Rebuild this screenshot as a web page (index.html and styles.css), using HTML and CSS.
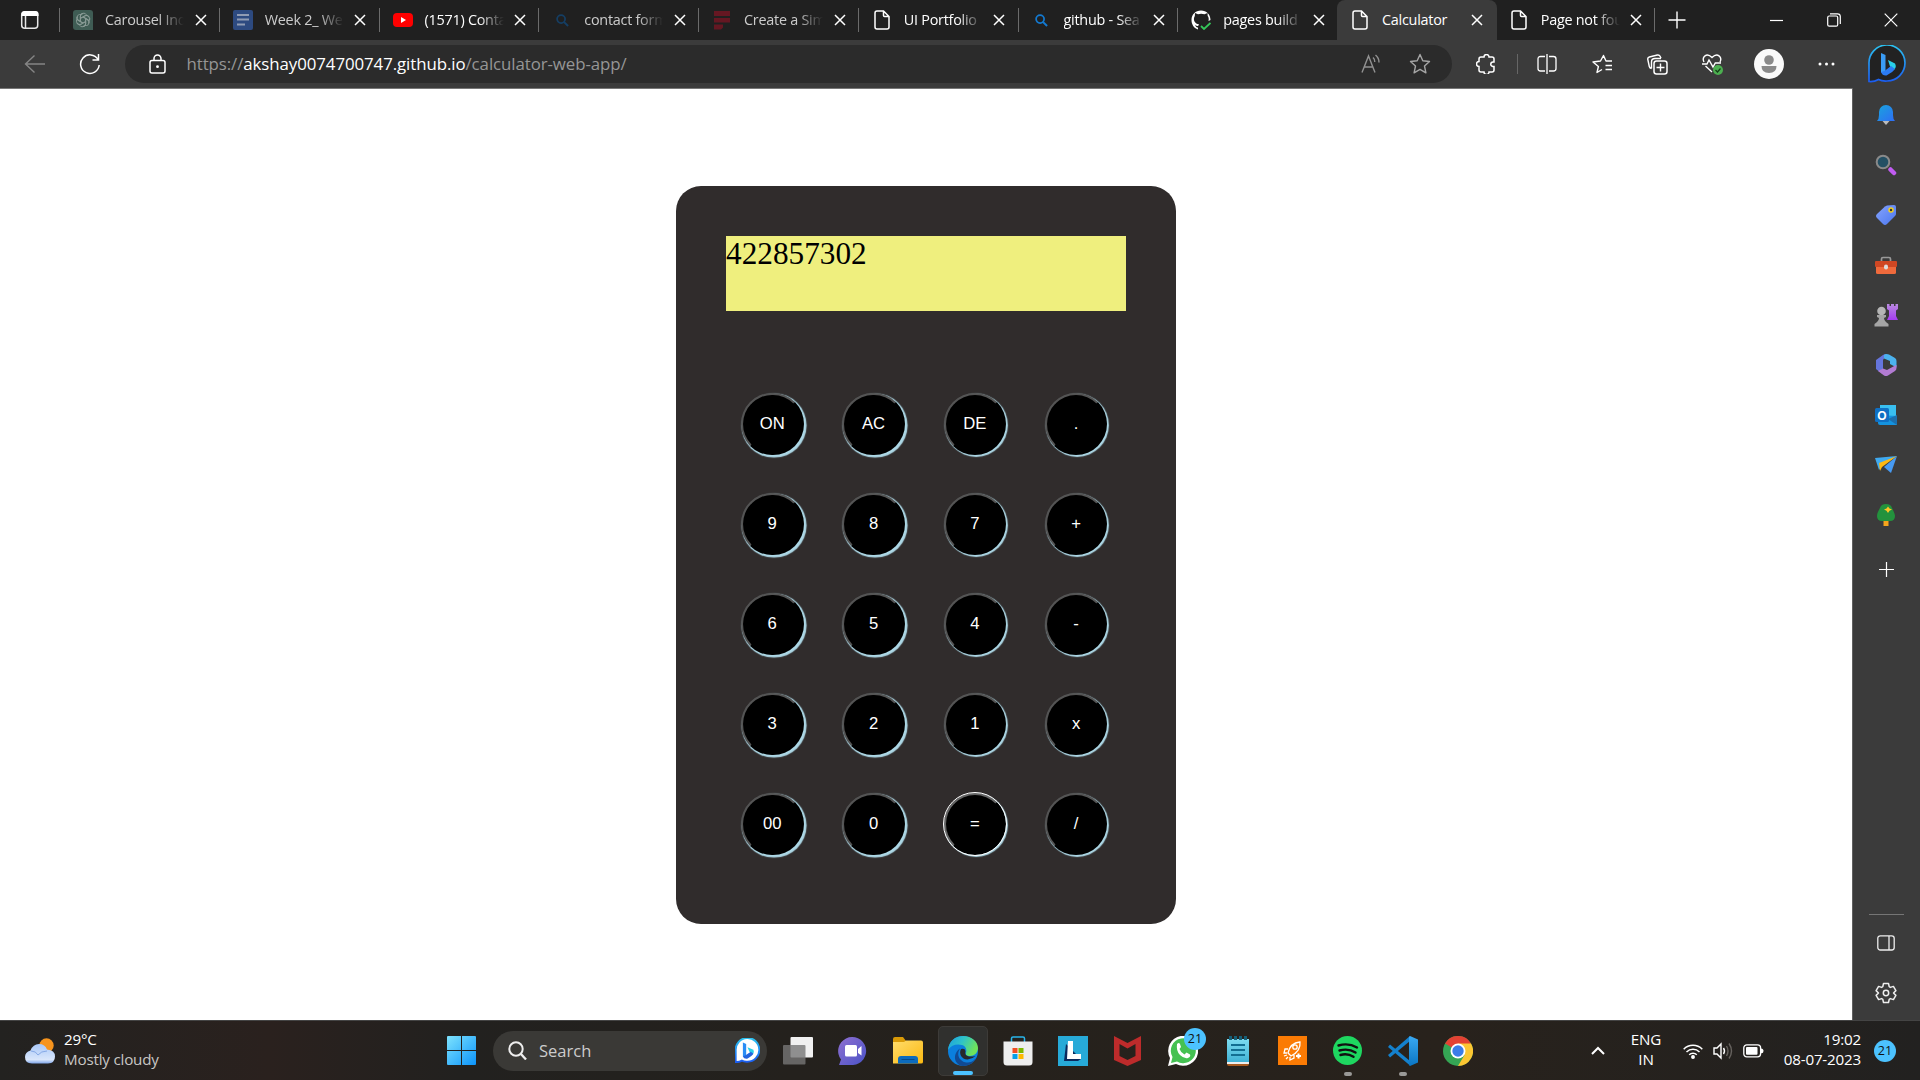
FILE: index.html
```html
<!DOCTYPE html>
<html lang="en">
<head>
<meta charset="utf-8">
<title>Calculator</title>
<link rel="stylesheet" href="styles.css">
</head>
<body>
<svg class="defs" aria-hidden="true">
  <defs>
    <symbol id="x" viewBox="0 0 12 12"><path d="M1 1l10 10M11 1L1 11" fill="none" stroke="#fff" stroke-width="1.500"/></symbol>
    <symbol id="page" viewBox="0 0 16 20"><path d="M3 1h6.500L15 6.500V17q0 2-2 2H3q-2 0-2-2V3q0-2 2-2zM9.500 1v4.500q0 1 1 1H15" fill="none" stroke="#fff" stroke-width="1.500"/></symbol>
    <symbol id="mag" viewBox="0 0 14 14"><circle cx="5.500" cy="5.500" r="4.300" fill="none" stroke="currentColor" stroke-width="1.900"/><path d="M8.500 8.500L13 13" stroke="currentColor" stroke-width="2.200"/></symbol>
    <linearGradient id="gb" x1="0" y1="0" x2="0" y2="1"><stop offset="0" stop-color="#2bc3f0"/><stop offset="1" stop-color="#1b5df0"/></linearGradient>
    <linearGradient id="gbell" x1="0" y1="0" x2="1" y2="1"><stop offset="0" stop-color="#19a5dc"/><stop offset="1" stop-color="#2f6df5"/></linearGradient>
    <linearGradient id="gwin" x1="0" y1="0" x2="1" y2="1"><stop offset="0" stop-color="#7ee3fd"/><stop offset="1" stop-color="#0c94fb"/></linearGradient>
    <linearGradient id="gtag" x1="0" y1="0" x2="1" y2="1"><stop offset="0" stop-color="#86a4fb"/><stop offset="1" stop-color="#4a76f0"/></linearGradient>
    <linearGradient id="gpur" x1="0" y1="0" x2="0" y2="1"><stop offset="0" stop-color="#b98ae0"/><stop offset="1" stop-color="#a63cf0"/></linearGradient>
    <linearGradient id="gchat" x1="0" y1="0" x2="1" y2="1"><stop offset="0" stop-color="#8f6fd0"/><stop offset="1" stop-color="#4a53c8"/></linearGradient>
    <linearGradient id="gcloud" x1="0" y1="0" x2="0" y2="1"><stop offset="0" stop-color="#a9c8f8"/><stop offset=".8" stop-color="#d9e6fb"/><stop offset="1" stop-color="#7fa5e8"/></linearGradient>
    <linearGradient id="gfold" x1="0" y1="0" x2="1" y2="1"><stop offset="0" stop-color="#ffdc6b"/><stop offset="1" stop-color="#fbb911"/></linearGradient>
    <linearGradient id="gedge" x1="0" y1="0" x2="1" y2=".4"><stop offset="0" stop-color="#1b9de0"/><stop offset=".5" stop-color="#2fc3c8"/><stop offset="1" stop-color="#6fe45a"/></linearGradient>
    <linearGradient id="gvs" x1="0" y1="0" x2="0" y2="1"><stop offset="0" stop-color="#3aa9f2"/><stop offset="1" stop-color="#0a76c4"/></linearGradient>
    <linearGradient id="gnote" x1="0" y1="0" x2="0" y2="1"><stop offset="0" stop-color="#7ddcf0"/><stop offset="1" stop-color="#41b3d6"/></linearGradient>
  </defs>
</svg>

<header class="tabstrip">
  <div class="tab-menu"><svg width="20" height="20" viewBox="0 0 20 20"><rect x="1.700" y="2" width="16" height="16.200" rx="3" fill="none" stroke="#e8e8e8" stroke-width="1.500"/><path d="M1.500 6V4q0-3 3-3h11q3 0 3 3v2z" fill="#fff"/><path d="M5.500 6v12" stroke="#e8e8e8" stroke-width="1.500"/></svg></div>
  <div class="tab dim"><span class="fav"><svg width="20" height="20" viewBox="0 0 20 20"><path d="M3 0h14q3 0 3 3v17H3q-3 0-3-3V3q0-3 3-3z" fill="#3f5c54"/><g fill="none" stroke="#8b9c97" stroke-width=".9"><path id="petal" d="M7.300 11.500V6.300a3.300 3.300 0 0 1 6.300-1.200M7.300 8.500l4.500-2.600a3 3 0 0 1 4 1"/><use href="#petal" transform="rotate(60 10 10)"/><use href="#petal" transform="rotate(120 10 10)"/><use href="#petal" transform="rotate(180 10 10)"/><use href="#petal" transform="rotate(240 10 10)"/><use href="#petal" transform="rotate(300 10 10)"/></g></svg></span><span class="title">Carousel Indi</span><svg class="close"><use href="#x"/></svg></div>
  <div class="tab dim"><span class="fav"><svg width="20" height="20" viewBox="0 0 20 20"><rect width="20" height="20" rx="2" fill="#2d4a80"/><path d="M4 5h12M4 9.500h12M4 14.500h8" stroke="#8f9bb3" stroke-width="2"/></svg></span><span class="title">Week 2_ We</span><svg class="close"><use href="#x"/></svg></div>
  <div class="tab"><span class="fav"><svg width="20" height="20" viewBox="0 0 20 20"><rect y="3" width="20" height="14" rx="4" fill="#f00"/><path d="M8 7v6l5-3z" fill="#fff"/></svg></span><span class="title">(1571) Conta</span><svg class="close"><use href="#x"/></svg></div>
  <div class="tab dim"><span class="fav deep"><svg width="13" height="13"><use href="#mag"/></svg></span><span class="title">contact form</span><svg class="close"><use href="#x"/></svg></div>
  <div class="tab dim"><span class="fav"><svg width="20" height="20" viewBox="0 0 20 20"><path d="M2 1h16v5H2zM2 8h16v4.500H2zM2 14.500h9v3L9 19.500H2z" fill="#651722"/></svg></span><span class="title">Create a Sim</span><svg class="close"><use href="#x"/></svg></div>
  <div class="tab"><span class="fav"><svg width="16" height="20"><use href="#page"/></svg></span><span class="title">UI Portfolio</span><svg class="close"><use href="#x"/></svg></div>
  <div class="tab"><span class="fav blue"><svg width="13" height="13"><use href="#mag"/></svg></span><span class="title">github - Sea</span><svg class="close"><use href="#x"/></svg></div>
  <div class="tab"><span class="fav"><svg width="20" height="20" viewBox="0 0 20 20"><path d="M7 19.500C2.500 18 .5 14 .5 10 .5 4.500 4.500.5 10 .5s9.500 4 9.500 9.500l-2 1c.4-2 .3-4-.8-5l-.2-3-3 1.200q-3.500-.7-6.500 0L4 3 3.800 6C1.500 10 4 14 8 14.300l-.7 1.500c-1.500.5-2.500 0-3.500-1.200 1 2.500 2 3 3.200 2.800z" fill="#fff"/><path d="M10 16l3 3 6.500-6" fill="none" stroke="#35c759" stroke-width="1.800"/></svg></span><span class="title">pages build</span><svg class="close"><use href="#x"/></svg></div>
  <div class="tab active"><span class="fav"><svg width="16" height="20"><use href="#page"/></svg></span><span class="title">Calculator</span><svg class="close"><use href="#x"/></svg></div>
  <div class="tab after"><span class="fav"><svg width="16" height="20"><use href="#page"/></svg></span><span class="title">Page not fou</span><svg class="close"><use href="#x"/></svg></div>
  <div class="newtab"><svg width="18" height="18" viewBox="0 0 18 18"><path d="M9 .5v17M.5 9h17" stroke="#fff" stroke-width="1.400"/></svg></div>
  <div class="winbtns">
    <span><svg width="13" height="13"><path d="M0 6.500h13" stroke="#fff" stroke-width="1.200"/></svg></span>
    <span><svg width="14" height="14" viewBox="0 0 14 14" fill="none" stroke="#fff"><rect x=".7" y="3" width="10" height="10.200" rx="1.500" stroke-width="1.200"/><path d="M3 .8h7.500q2.800 0 2.800 2.800V11" stroke-width="1.200"/></svg></span>
    <span><svg width="14" height="14" viewBox="0 0 14 14"><path d="M.7.7l12.600 12.600M13.300.7L.7 13.300" stroke="#fff" stroke-width="1.200"/></svg></span>
  </div>
</header>

<nav class="toolbar">
  <span class="tool nav"><svg width="22" height="20" viewBox="0 0 22 20"><path d="M21 10H1.500M10.500 1.500L1.500 10l9 8.500" fill="none" stroke="#858585" stroke-width="1.400"/></svg></span>
  <span class="tool nav"><svg width="22" height="22" viewBox="0 0 22 22"><path d="M19 6.500A9.300 9.300 0 1 0 20.200 12M19.500 1v6h-6" fill="none" stroke="#fff" stroke-width="1.500"/></svg></span>
  <div class="address">
    <svg class="lock" width="17" height="20" viewBox="0 0 17 20"><rect x="1" y="6.500" width="15" height="12.500" rx="2" fill="none" stroke="#fff" stroke-width="1.500"/><path d="M5 6.500V4.500a3.500 3.500 0 0 1 7 0v2" fill="none" stroke="#fff" stroke-width="1.500"/><circle cx="8.500" cy="12.700" r="1.400" fill="#fff"/></svg>
    <span class="url">https://<b>akshay0074700747.github.io</b>/calculator-web-app/</span>
    <svg class="aloud" width="20" height="20" viewBox="0 0 20 20"><path d="M1 18.500L7.500 2 14 18.500M3.300 13h8.400M12 3.500q2 1.800 1.800 4.500M14.500 1q3.600 3 3.500 7.500" fill="none" stroke="#919191" stroke-width="1.400"/></svg>
    <svg class="star" width="22" height="22" viewBox="0 0 22 22"><path d="M11 1.500l2.800 6.200 6.700.8-5 4.500 1.400 6.800L11 16.400l-5.900 3.400L6.500 13l-5-4.500 6.700-.8z" fill="none" stroke="#a5a5a5" stroke-width="1.400" stroke-linejoin="round"/></svg>
  </div>
  <span class="tool puzzle"><svg width="20" height="20" viewBox="0 0 20 20"><path d="M5 3h3a2.500 2.500 0 0 1 5 0h3q2 0 2 2v3h-1a2.200 2.200 0 0 0 0 4.500h1V16q0 2-2 2h-3a2.500 2.500 0 0 1-5 0H5q-2 0-2-2v-3.500a2.500 2.500 0 0 1 0-5V5q0-2 2-2z" fill="none" stroke="#fff" stroke-width="1.500"/></svg></span>
  <i class="vline"></i>
  <span class="tool split"><svg width="20" height="20" viewBox="0 0 20 20"><path d="M8 2.500H3.500Q1 2.500 1 5v9.500Q1 17 3.500 17H8M12 2.500h4.500Q19 2.500 19 5v9.500q0 2.500-2.500 2.500H12M10 0v20" fill="none" stroke="#fff" stroke-width="1.300"/></svg></span>
  <span class="tool"><svg width="21" height="20" viewBox="0 0 21 20"><path d="M20 7h-6l-2.500-5.500L8.500 7 1 8l5.400 4.500L5 18.500l5-3M13.500 11.500H20M13.500 15.500H20" fill="none" stroke="#fff" stroke-width="1.400" stroke-linejoin="round"/></svg></span>
  <span class="tool"><svg width="21" height="21" viewBox="0 0 21 21"><rect x="7" y="7" width="13" height="13" rx="2.500" fill="none" stroke="#fff" stroke-width="1.500"/><path d="M13.500 9.500v8M9.500 13.500h8M4.500 14.500q-1.800-.3-2.200-2L.8 5.500q-.4-2 1.500-2.500l8-2q2-.4 2.800 1.300L14 4.300M4.500 14.500V8q0-3.500 3.500-3.500h6" fill="none" stroke="#fff" stroke-width="1.400"/></svg></span>
  <span class="tool"><svg width="21" height="22" viewBox="0 0 21 22"><path d="M2 9C-.5 4 4.500-.8 10 4.500c5.500-5.300 10.500-.5 8 4.500M3.500 13l6.500 6M0 11h5l2-4 4 7 2.300-4H19" fill="none" stroke="#fff" stroke-width="1.400"/><circle cx="16" cy="17" r="5" fill="#4caf50"/><path d="M13.500 17l2 2 3-3.500" fill="none" stroke="#163d18" stroke-width="1.200"/></svg></span>
  <span class="tool profile"><svg width="30" height="30" viewBox="0 0 30 30"><circle cx="15" cy="15" r="15" fill="#fafafa"/><circle cx="15" cy="11" r="4.800" fill="#8a8a8a"/><path d="M7.500 17h15q0 7-7.500 7t-7.500-7z" fill="#8a8a8a"/></svg></span>
  <span class="tool dots"><svg width="17" height="4"><circle cx="2" cy="2" r="1.500" fill="#fff"/><circle cx="8.500" cy="2" r="1.500" fill="#fff"/><circle cx="15" cy="2" r="1.500" fill="#fff"/></svg></span>
  <span class="tool bing"><svg width="38" height="38" viewBox="0 0 38 38"><path d="M1 36.500V19A18 18 0 1 1 19 36q-5 .3-8.500-1.500Q6 37 1 36.500z" fill="#222" stroke="url(#gb)" stroke-width="1.700"/><path d="M13 8l4.500 2v18l-2 1.500-2.500-2.500z" fill="#3a9cf5"/><path d="M20 15l7 3.500q2 3.500-1 6l-4-3z" fill="#29cfe8"/><path d="M13 27l3.500-1L23 21l4 3q-1.500 2.500-8.500 6.500-4 .5-5.500-3.500z" fill="#2b7bf3"/></svg></span>
</nav>

<div class="middle">
  <main class="viewport">
    <section class="calculator">
      <div class="display">422857302</div>
      <div class="keys">
        <button class="deep-shadow">ON</button><button class="deep-shadow">AC</button><button>DE</button><button>.</button>
        <button class="deep-shadow">9</button><button class="deep-shadow">8</button><button>7</button><button>+</button>
        <button class="deep-shadow">6</button><button class="deep-shadow">5</button><button>4</button><button>-</button>
        <button class="deep-shadow">3</button><button class="deep-shadow">2</button><button>1</button><button>x</button>
        <button class="deep-shadow">00</button><button class="deep-shadow">0</button><button class="focused">=</button><button>/</button>
      </div>
    </section>
  </main>
  <aside class="sidebar">
    <span><svg width="20" height="22" viewBox="0 0 20 22"><path d="M6.500 17h7l-3.500 4z" fill="#bbb"/><path d="M1 17q2-2 2-6V8a7 7 0 0 1 14 0v3q0 4 2 6z" fill="url(#gbell)"/></svg></span>
    <span><svg width="22" height="22" viewBox="0 0 22 22"><circle cx="8" cy="8" r="6.300" fill="#245064" stroke="#8a8a8a" stroke-width="2"/><path d="M15.500 15.500l3.500 3.500" stroke="#c15cf2" stroke-width="4.500" stroke-linecap="round"/></svg></span>
    <span><svg width="22" height="22" viewBox="0 0 22 22"><path d="M12 1.500L19 1q2 0 2 2v7q0 1-1 2l-8 8q-2 2-4 0l-6-6q-2-2 0-4l8-7.500z" fill="url(#gtag)"/><circle cx="16" cy="6" r="2" fill="#333" stroke="#f2cf1d" stroke-width="1.500"/></svg></span>
    <span><svg width="24" height="18" viewBox="0 0 24 18"><path d="M7.500 5V3q0-1.500 1.500-1.500h6q1.500 0 1.500 1.500v2" fill="none" stroke="#999" stroke-width="1.700"/><rect x="2" y="7" width="20" height="11" rx="1.500" fill="#ef6a3c"/><rect x="1" y="5" width="22" height="6" rx="1" fill="#cf4723"/><rect x="10" y="8.500" width="4" height="5" rx="2" fill="#ddd"/></svg></span>
    <span><svg width="24" height="24" viewBox="0 0 24 24"><path d="M13 1h2.500v2H17V1h3v2h1.500V1H24v5l-2 1.500V13l2 4H13l2-4V7.500L13 6z" fill="url(#gpur)"/><circle cx="7.500" cy="8" r="4.300" fill="#b5b5b5"/><path d="M3 12h9v2l-2 1q0 3 4.500 6v2.500H.5V21Q5 18 5 15l-2-1z" fill="#a5a5a5"/></svg></span>
    <span><svg width="22" height="24" viewBox="0 0 22 24"><path d="M1 7l7-5q2-1.500 4-1L8 7v9l-4 2.500L1 16z" fill="#6575dc"/><path d="M9 2q2-1.500 5-.5L20 5q1.500 1 1.500 3v6.500L15 11V8L9 5.500z" fill="#4bb2ee"/><path d="M21.500 12v3q0 2-1.500 3l-7 4.500q-2 1-4 0L3 18l5-2.500 4 1.500 9-5z" fill="#b27bd2"/></svg></span>
    <span><svg width="22" height="20" viewBox="0 0 22 20"><path d="M5 0h16v12H5z" fill="#39bff0"/><path d="M3 10l19 1v9H5q-2 0-2-2z" fill="#1493df"/><path d="M13 14l9-4v10z" fill="#1c6fae"/><rect y="3" width="14" height="14" rx="1.500" fill="#0f70c4"/><text x="7" y="14.500" class="outlook">O</text></svg></span>
    <span><svg width="22" height="18" viewBox="0 0 22 18"><path d="M0 2L22 0 9 8l-5 6z" fill="#3faaf0"/><path d="M4 7L22 0 7 11l-2 4z" fill="#fdb813"/><path d="M22 0L9 11l7 6z" fill="#479af2"/></svg></span>
    <span><svg width="20" height="24" viewBox="0 0 20 24"><path d="M7.500 16h5v7h-5z" fill="#f6a51c"/><path d="M10 1q5 0 6 4 3 6 3 8 0 5-5 5H6q-5 0-5-5 0-3 3-8 1-4 6-4z" fill="#23923d"/><path d="M12 3.500l1.500 2 2.500 1-2.500 1.200-1.500 2.300-1.500-2.300L8 6.500l2.500-1z" fill="#ffc526"/></svg></span>
    <span class="add"><svg width="15" height="15"><path d="M7.500 0v15M0 7.500h15" stroke="#fff" stroke-width="1.200"/></svg></span>
    <hr>
    <span><svg width="18" height="16" viewBox="0 0 18 16"><rect x=".8" y=".8" width="16.400" height="14.200" rx="2.500" fill="none" stroke="#eee" stroke-width="1.300"/><path d="M12 1v14" stroke="#eee" stroke-width="1.300"/></svg></span>
    <span><svg width="22" height="22" viewBox="0 0 22 22"><path d="M8.500 1.500h5l.7 3.200 1.200.7 3-1 2.500 4.200-2.400 2.400 2.400 2.400-2.500 4.200-3-1-1.200.7-.7 3.200h-5l-.7-3.200-1.200-.7-3 1-2.500-4.200L3.500 11 1.100 8.600l2.500-4.200 3 1 1.200-.7z" fill="none" stroke="#eee" stroke-width="1.500" stroke-linejoin="round"/><circle cx="11" cy="11" r="2.700" fill="none" stroke="#eee" stroke-width="1.500"/></svg></span>
  </aside>
</div>

<footer class="taskbar">
  <div class="weather">
    <svg width="30" height="26" viewBox="0 0 30 26"><circle cx="21.500" cy="7.500" r="7.200" fill="#f7941d"/><path d="M7 25.500q-7 0-7-6.500 0-5 5.500-6.500Q8 6 14 6q6 0 8 5.500 8 .5 8 7t-7 7z" fill="url(#gcloud)"/><path d="M6 13q5 0 7 4 3-4 9-4" fill="none" stroke="#86a9e6" stroke-width="1"/></svg>
    <p>29°C<br><span>Mostly cloudy</span></p>
  </div>
  <svg class="start" width="29" height="29" viewBox="0 0 29 29"><path d="M1 0h13v14H0V1q0-1 1-1zM15 0h13q1 0 1 1v13H15zM0 15h14v14H1q-1 0-1-1zM15 15h14v13q0 1-1 1H15z" fill="url(#gwin)"/></svg>
  <div class="search">
    <svg width="19" height="19" viewBox="0 0 19 19"><circle cx="8" cy="8" r="6.700" fill="none" stroke="#eee" stroke-width="2"/><path d="M12.500 12.500l5.500 6" stroke="#eee" stroke-width="2.300"/></svg>
    <span>Search</span>
    <svg width="25" height="25" viewBox="0 0 38 38"><path d="M1 36.500V19A18 18 0 1 1 19 36q-5 .3-8.500-1.500Q6 37 1 36.500z" fill="#fff" stroke="url(#gb)" stroke-width="3"/><path d="M12 7l5 2v20l-2 1.500-3-2.500z" fill="#2a8df5"/><path d="M19 14l9 4q2 4-1 7l-5-4z" fill="#29cfe8"/><path d="M12 28l3.500-1.500L24 21l4 3q-1.500 3-9.500 7.500-5 .5-6.500-3.500z" fill="#2464dd"/></svg>
  </div>
  <div class="apps">
    <span><svg width="30" height="28" viewBox="0 0 30 28"><rect x="7.500" width="22.500" height="20.500" rx="1" fill="#f1f1f1"/><rect y="8" width="22.500" height="19.500" rx="1" fill="#777" opacity=".8"/></svg></span>
    <span><svg width="30" height="28" viewBox="0 0 30 28"><path d="M1 28l2-5.500A14 14 0 1 1 15 28z" fill="url(#gchat)"/><rect x="7" y="8" width="12" height="11.500" rx="1.500" fill="#fff"/><path d="M20 12l3.500-3v9.500L20 16z" fill="#fff"/></svg></span>
    <span><svg width="30" height="27" viewBox="0 0 30 27"><path d="M0 2q0-2 2-2h8l3 4h15v4H0z" fill="#d99a07"/><path d="M0 5h11l2-1.500h15q2 0 2 2V25q0 1.500-2 1.500H0z" fill="url(#gfold)"/><path d="M5 26.500V22q0-3 3-3h14q3 0 3 3v4.500z" fill="#0c6bbd"/><path d="M8.500 22.500h13" stroke="#064a8a"/></svg></span>
    <span class="current"><svg width="30" height="30" viewBox="0 0 30 30"><circle cx="15" cy="15" r="15" fill="#0b7fdd"/><path d="M0 14C1 5 7 0 15 0c9 0 15 6 15 12 0 5-4 8-8 8-3 0-5-1-4-3 1-3 0-7-4-8Q5 7 0 14z" fill="url(#gedge)"/><path d="M12 12.500c-5 8 2 14.500 8 14 4 0 7-3 9-5.500Q24 30 15 30C6 29 4 18 12 12.500z" fill="#114a93"/><path d="M13 13q4-1 4.500 2-1 4 2 5t8 0q-3 3-8 3.500c-6 0-9-6-6.500-10.500z" fill="#27292b"/></svg></span>
    <span><svg width="30" height="30" viewBox="0 0 30 30"><path d="M8.500 6V2.500q0-1.500 1.500-1.500h10q1.500 0 1.500 1.500V6" fill="none" stroke="#28b5ea" stroke-width="1.500"/><path d="M.5 5.500h29V26q0 3.500-3.500 3.500H4Q.5 29.500.5 26z" fill="#eee"/><path d="M9.500 12h5v5h-5z" fill="#f04e23"/><path d="M15.500 12h5v5h-5z" fill="#7db900"/><path d="M9.500 18h5v5h-5z" fill="#049fe8"/><path d="M15.500 18h5v5h-5z" fill="#fdb900"/></svg></span>
    <span><svg width="30" height="30" viewBox="0 0 30 30"><path d="M0 0h30v30H0z" fill="#27aad8"/><path d="M8 8L6 25h14l3-2z" fill="#0b2a5e"/><path d="M10 5h5v13h8v5H9z" fill="#fff"/></svg></span>
    <span><svg width="27" height="30" viewBox="0 0 27 30"><path d="M0 0l13.500 7L27 0v24l-13.500 6L0 24zM5.500 8v12l8 4 8-4V8l-8 4.500z" fill="#bd2b2b" fill-rule="evenodd"/></svg></span>
    <span class="whatsapp"><svg width="30" height="30" viewBox="0 0 30 30"><path d="M0 30l2-8A15 15 0 1 1 8 28z" fill="#fff"/><path d="M3 27l1.500-6A12.500 12.500 0 1 1 9 25.500z" fill="#45c152"/><path d="M9 8q2-2 3 0l1 3-1.500 2q1.500 4 5 5.500l2-2 3.500 2q1 2-2 3.500-4 1-8-3T9 8z" fill="#fff"/></svg><em>21</em></span>
    <span><svg width="22" height="30" viewBox="0 0 22 30"><path d="M0 26h22v2q0 2-2 2H2q-2 0-2-2z" fill="#a85b20"/><path d="M0 3h22v25H0z" fill="#eee"/><path d="M0 3h22v23H0z" fill="url(#gnote)"/><path d="M4 9h14M4 14h14M4 19h14" stroke="#136f92" stroke-width="2"/><path d="M3.500 0v4M8.500 0v4M13.500 0v4M18.500 0v4" stroke="#155f78" stroke-width="3"/></svg></span>
    <span><svg width="29" height="29" viewBox="0 0 29 29"><path d="M0 0h29v29H0z" fill="#fb7b04"/><path d="M10 17q2-10 12-11 1 9-9 14zM10 13H7l-1 4h3M16 19v3l-4 2v-3M6 20l3-1M8 23l2-2" fill="none" stroke="#fff" stroke-width="1.300"/><circle cx="17" cy="11" r="2.200" fill="none" stroke="#fff" stroke-width="1.300"/><path d="M20.500 17.500v5M18 20h5" stroke="#fff" stroke-width="2"/></svg></span>
    <span class="running"><svg width="29" height="29" viewBox="0 0 29 29"><circle cx="14.500" cy="14.500" r="14.500" fill="#1ed760"/><path d="M5.500 9.500q10-3 18.500 2M6.500 14.500q9-2.500 16 2M7.500 19q7-2 13 1.800" fill="none" stroke="#111" stroke-width="2.400" stroke-linecap="round"/></svg></span>
    <span class="running"><svg width="30" height="30" viewBox="0 0 30 30"><path d="M2 8.500L22 25v4.500L0 11z" fill="#1481cd"/><path d="M2 21.500L22 5V0L0 19z" fill="#1481cd"/><path d="M22 0l8 3.500v23L22 30l-1-1V1z" fill="url(#gvs)"/></svg></span>
    <span><svg width="30" height="30" viewBox="0 0 30 30"><circle cx="15" cy="15" r="15" fill="#35a554"/><path d="M15 15L2 7.500A15 15 0 0 1 28 7.500z" fill="#e34133"/><path d="M15 7.500h13A15 15 0 0 1 15 30l6.500-11z" fill="#fcc632"/><circle cx="15" cy="15" r="7.500" fill="#fff"/><circle cx="15" cy="15" r="5.700" fill="#3b7de8"/></svg></span>
  </div>
  <div class="tray">
    <svg class="chev" width="14" height="9" viewBox="0 0 14 9"><path d="M1 8l6-6 6 6" fill="none" stroke="#fff" stroke-width="2"/></svg>
    <p class="lang">ENG<br>IN</p>
    <svg class="wifi" width="20" height="16" viewBox="0 0 20 16" fill="none" stroke="#fff" stroke-width="1.500"><path d="M.7 6.200a13.200 13.200 0 0 1 18.600 0M3.500 9a9.200 9.200 0 0 1 13 0M6.200 11.700a5.400 5.400 0 0 1 7.600 0"/><circle cx="10" cy="14" r="1.200" fill="#fff"/></svg>
    <svg class="sound" width="20" height="18" viewBox="0 0 20 18" fill="none" stroke="#fff" stroke-width="1.400"><path d="M1 6h3l4-4v14l-4-4H1zM10.500 6q2 3 0 6"/><path d="M13.500 4q3 5 0 10M16 1.500q5 7.500 0 15" stroke="#66625e"/></svg>
    <svg class="batt" width="21" height="14" viewBox="0 0 21 14"><rect x=".8" y=".8" width="16.800" height="12" rx="3" fill="none" stroke="#fff" stroke-width="1.300"/><rect x="3" y="3" width="11.500" height="7.700" rx="1" fill="#fff"/><path d="M18 4.500q2.500 0 2.500 2.500T18 9.200z" fill="#fff"/></svg>
    <p class="clock">19:02<br>08-07-2023</p>
    <em>21</em>
  </div>
</footer>
</body>
</html>
```
FILE: styles.css
```css
* { box-sizing: border-box; }

body {
  margin: 0;
  width: 1920px;
  height: 1080px;
  overflow: hidden;
  display: flex;
  flex-direction: column;
  background: #3b3b3b;
  color: #fff;
  font-family: "Open Sans", "Noto Sans", sans-serif;
}

svg { display: block; flex: none; }
p { margin: 0; }
em { font-style: normal; }
.defs { position: absolute; width: 0; height: 0; }

/* Tab strip */
.tabstrip { display: flex; height: 40px; background: #202020; flex: none; }
.tab-menu { width: 59px; display: flex; align-items: center; padding-left: 20px; }
.tab {
  width: 159.75px;
  flex: none;
  display: flex;
  align-items: center;
  padding-left: 14px;
  background: linear-gradient(#6b6b6b, #6b6b6b) 0 8px / 1px 24px no-repeat;
}
.fav { width: 20px; display: flex; justify-content: center; color: #1379d0; margin-right: 12px; }
.fav.deep { color: #153e63; }
.title {
  width: 84px;
  height: 22px;
  white-space: nowrap;
  font-size: 14.4px;
  letter-spacing: -0.25px;
  line-height: 21px;
  -webkit-mask-image: linear-gradient(90deg, #000 64%, transparent 94%);
  mask-image: linear-gradient(90deg, #000 64%, transparent 94%);
}
.dim .title { color: #ccc; }
.close { width: 12px; height: 12px; margin-left: 5.5px; }
.tab.active { background: #3b3b3b; border-radius: 8px 8px 0 0; padding-left: 13px; }
.active .title { -webkit-mask-image: none; mask-image: none; }
.active .close, .after .close { margin-left: 5px; }
.tab.after { background: none; width: 157.5px; padding-left: 12px; }
.newtab {
  width: 46px;
  display: flex;
  align-items: center;
  justify-content: center;
  background: linear-gradient(#6b6b6b, #6b6b6b) 0 8px / 1px 24px no-repeat;
}
.winbtns { display: flex; margin-left: auto; }
.winbtns span { width: 57.5px; display: flex; align-items: center; justify-content: center; }

/* Address toolbar */
.toolbar { display: flex; align-items: center; height: 48px; padding-left: 7px; flex: none; }
.tool { width: 55px; flex: none; display: flex; justify-content: center; align-items: center; }
.address {
  display: flex;
  align-items: center;
  width: 1327px;
  height: 38px;
  margin-left: 8px;
  padding: 0 21px 0 24px;
  border-radius: 19px;
  background: #2b2b2b;
}
.lock { margin-right: 20.5px; }
.url { flex: 1; color: #969696; font-size: 16.85px; letter-spacing: -0.08px; white-space: nowrap; line-height: 24px; }
.url b { font-weight: 400; color: #fff; }
.aloud { margin-right: 28px; }
.puzzle { width: 60px; margin-left: 4px; }
.vline { width: 1px; height: 20px; background: #666; margin: 0 1px; }
.split { width: 56px; }
.profile { width: 58px; }
.dots { width: 56px; }
.bing { width: 66px; }

/* Page and sidebar */
.middle { display: flex; flex: 1; min-height: 0; }
.viewport {
  width: 1852px;
  display: flex;
  justify-content: center;
  align-items: flex-start;
  padding-top: 97px;
  background: #fff;
  border-top: 1px solid #777;
}
.calculator { width: 500px; height: 738px; padding: 50px; border-radius: 25px; background: #302c2c; }
.display {
  height: 75px;
  background: #efef7e;
  color: #000;
  font: 31.25px/36px "Liberation Serif", serif;
}
.keys {
  display: grid;
  grid-template-columns: repeat(4, 62.5px);
  grid-auto-rows: 62.5px;
  gap: 37.5px 38.8px;
  padding: 81.5px 0 0 15px;
}
.keys button {
  border: 2px outset #000;
  border-radius: 50%;
  padding: 1px 0 0;
  background: #000;
  color: #fff;
  font: 16.67px "Liberation Sans", sans-serif;
  box-shadow: 1.2px 1.2px 1px 0.7px lightblue;
}
.keys .deep-shadow { box-shadow: 1.5px 1.5px 1px 1.1px lightblue; }
.keys .focused { border-color: #101010; outline: 1px solid #fff; }

.sidebar {
  width: 68px;
  display: flex;
  flex-direction: column;
  padding: 2px 1px 2px 0;
  border-left: 1px solid #606060;
}
.sidebar span { height: 50px; flex: none; display: flex; align-items: center; justify-content: center; }
.sidebar .add { margin-top: 4px; }
.sidebar hr { width: 35px; height: 1px; border: 0; margin: auto auto 3px; background: #757575; }
.outlook { font: bold 12px "Liberation Sans", sans-serif; fill: #fff; text-anchor: middle; }

/* Taskbar */
.taskbar {
  display: flex;
  align-items: center;
  height: 60px;
  flex: none;
  border-top: 1px solid #444;
  background: linear-gradient(90deg, #232220, #2a211e 14%, #22211f 24%, #25211c 50%, #28221c 75%, #222120);
}
.weather { width: 447px; flex: none; display: flex; align-items: center; gap: 9px; padding-left: 25px; }
.weather p, .lang, .clock { font-size: 15.2px; line-height: 20px; letter-spacing: -0.2px; padding-bottom: 4px; }
.weather span { color: #c8c6c4; }
.search {
  display: flex;
  align-items: center;
  width: 274px;
  height: 40px;
  margin-left: 17px;
  padding: 0 7px 0 15px;
  border-radius: 20px;
  background: #3a3936;
  color: #ccc;
  font-size: 16.5px;
}
.search span { flex: 1; margin-left: 12px; }
.apps { display: flex; margin-left: 3px; }
.apps span { position: relative; width: 55px; height: 50px; display: flex; align-items: center; justify-content: center; }
.apps .current { width: 50px; margin: 0 2.5px; background: #30302e; border: 1px solid #3d3b38; border-radius: 5px; }
.current::after, .running::after {
  content: "";
  position: absolute;
  bottom: 0;
  width: 20px;
  height: 4px;
  border-radius: 2px;
  background: #4cc2ff;
}
.running::after { width: 8px; background: #9a9997; }
em {
  height: 22px;
  width: 22px;
  border-radius: 11px;
  background: #4cc2ff;
  color: #111;
  font-size: 12.5px;
  line-height: 21px;
  text-align: center;
}
.whatsapp em { position: absolute; top: 2px; right: 4px; }
.tray { display: flex; align-items: center; margin-left: auto; padding-right: 24px; }
.lang { width: 60px; text-align: center; margin-left: 11px; }
.wifi { margin-left: 7px; }
.sound { margin-left: 10px; }
.batt { margin-left: 10px; }
.clock { width: 97px; text-align: right; margin-right: 13px; }
```
